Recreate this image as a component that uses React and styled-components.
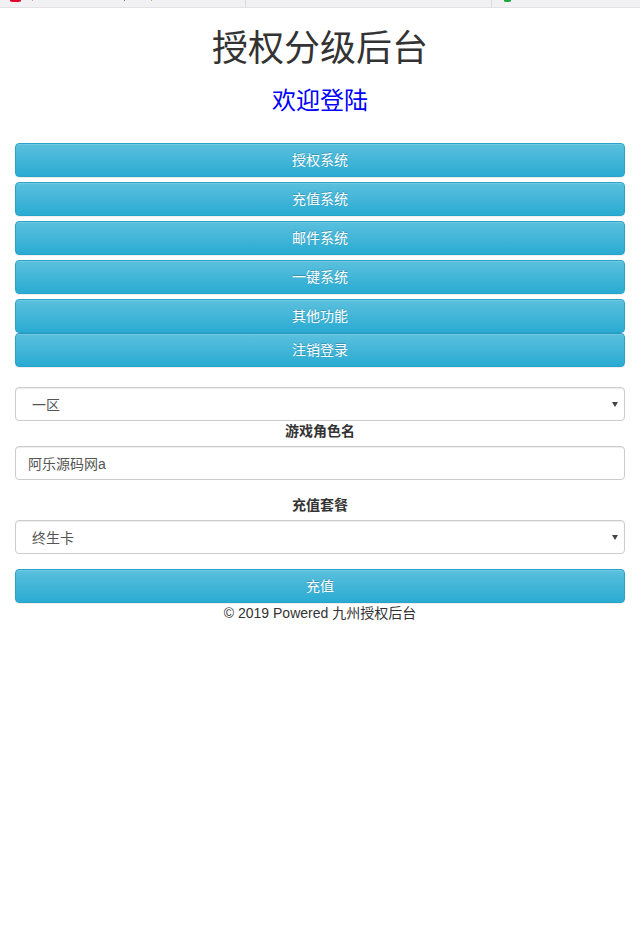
import React from 'react';
import styled, { createGlobalStyle } from 'styled-components';

const MENU_ITEMS = ['授权系统', '充值系统', '邮件系统', '一键系统', '其他功能'];

const GlobalStyle = createGlobalStyle`
  * {
    box-sizing: border-box;
  }
  body {
    margin: 0;
    background: #fff;
    color: #333;
    font-family: "Liberation Sans", "Noto Sans CJK SC", sans-serif;
    font-size: 14px;
    line-height: 20px;
  }
`;

const TabStrip = styled.div`
  display: grid;
  grid-template-columns: 246px 246px 1fr;
  height: 8px;
  background: #f1f1f4;
  border-bottom: 1px solid #e2e2e4;
`;

const Tab = styled.div`
  display: flex;
  align-items: flex-start;
  padding-left: ${props => props.$inset}px;
  border-right: ${props => props.$last ? 'none' : '1px solid #dcdcde'};
`;

const TabIcon = styled.span`
  width: ${props => props.$size}px;
  height: 2px;
  border-radius: 0 0 50% 50%;
  background: ${props => props.$color};
`;

const TabTextEnd = styled.span`
  width: 1px;
  height: 1px;
  margin-left: ${props => props.$before}px;
  background: ${props => props.$color};
`;

const Page = styled.div`
  padding: 0 15px;
`;

const Title = styled.h1`
  margin: 16px 0 10px;
  font-size: 36px;
  font-weight: 400;
  line-height: 50px;
  text-align: center;
  color: #333;
`;

const Welcome = styled.h3`
  margin: 0 0 25px;
  font-size: 24px;
  font-weight: 400;
  line-height: 34px;
  text-align: center;
  color: #0000ff;
`;

const Menu = styled.div`
  display: flex;
  flex-direction: column;
  gap: 5px;
`;

const Button = styled.button`
  display: block;
  width: 100%;
  height: 34px;
  padding: 0;
  border: 1px solid #28a4c9;
  border-radius: 4px;
  background: linear-gradient(to bottom, #5bc0de 0%, #2aabd2 100%);
  box-shadow: inset 0 1px 0 rgba(255, 255, 255, 0.15), 0 1px 1px rgba(0, 0, 0, 0.075);
  color: #fff;
  font: inherit;
  text-shadow: 0 -1px 0 rgba(0, 0, 0, 0.2);
`;

const Form = styled.form`
  display: flex;
  flex-direction: column;
  padding-top: 20px;
`;

const SelectBox = styled.div`
  display: flex;
  align-items: center;
  justify-content: space-between;
  height: 34px;
  padding: 0 6px 0 16px;
  border: 1px solid #ccc;
  border-radius: 4px;
  background: #fff;
  box-shadow: inset 0 1px 1px rgba(0, 0, 0, 0.075);
  color: #555;
`;

const SelectValue = styled.span`
  padding-top: 2px;
`;

const Caret = styled.span`
  width: 0;
  height: 0;
  border-left: 3.5px solid transparent;
  border-right: 3.5px solid transparent;
  border-top: 5px solid #444;
`;

const Label = styled.div`
  margin-bottom: 5px;
  font-weight: 700;
  text-align: center;
  color: #333;
`;

const Input = styled.input`
  display: block;
  width: 100%;
  height: 34px;
  margin-bottom: 15px;
  padding: 6px 12px;
  border: 1px solid #ccc;
  border-radius: 4px;
  box-shadow: inset 0 1px 1px rgba(0, 0, 0, 0.075);
  color: #555;
  font: inherit;
  outline: none;
`;

const SubmitRow = styled.div`
  padding-top: 15px;
`;

const Footer = styled.div`
  text-align: center;
  color: #333;
`;

const Select = ({ value }) => (
  <SelectBox>
    <SelectValue>{value}</SelectValue>
    <Caret />
  </SelectBox>
);

const App = () => {
  return (
    <>
      <GlobalStyle />
      <TabStrip>
        <Tab $inset={10}>
          <TabIcon $size={11} $color="#e6002d" />
          <TabTextEnd $before={11} $color="#e88aa0" />
          <TabTextEnd $before={91} $color="#5a6fc0" />
          <TabTextEnd $before={26} $color="#d9a05a" />
        </Tab>
        <Tab $inset={10}>
          <TabTextEnd $before={6} $color="#e9e9ec" />
        </Tab>
        <Tab $inset={12} $last>
          <TabIcon $size={7} $color="#1aa83c" />
        </Tab>
      </TabStrip>
      <Page>
        <Title>授权分级后台</Title>
        <Welcome>欢迎登陆</Welcome>
        <Menu>
          {MENU_ITEMS.map(item => (
            <Button key={item} type="button">{item}</Button>
          ))}
        </Menu>
        <Button type="button">注销登录</Button>
        <Form>
          <Select value="一区" />
          <Label>游戏角色名</Label>
          <Input readOnly value="阿乐源码网a" />
          <Label>充值套餐</Label>
          <Select value="终生卡" />
          <SubmitRow>
            <Button type="button">充值</Button>
          </SubmitRow>
        </Form>
        <Footer>© 2019 Powered 九州授权后台</Footer>
      </Page>
    </>
  );
};

export default App;
